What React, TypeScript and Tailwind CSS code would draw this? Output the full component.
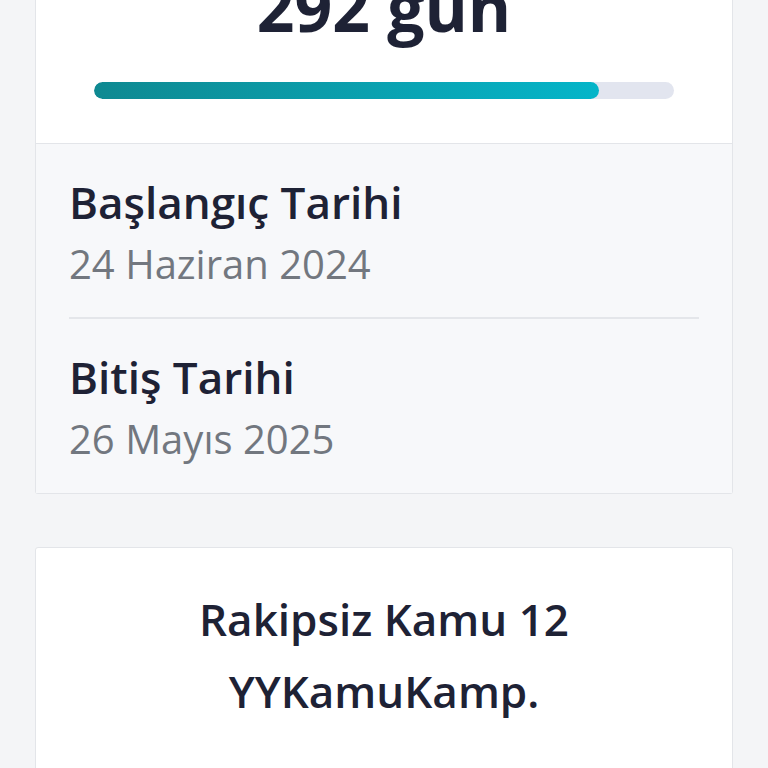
export default function App() {
  return (
    <div
      className="min-h-screen w-full bg-[#f4f5f7] px-[35px] overflow-hidden"
      style={{ fontFamily: "'Open Sans', 'Noto Sans', sans-serif" }}
    >
      <div className="h-[768px] overflow-hidden">
        {/* Countdown card */}
        <div className="-mt-[30px] bg-white border border-t-0 border-[#e3e5e9] rounded-b-[3px]">
          <div className="px-[58px] pb-[44px] flex flex-col items-center">
            <div className="text-[66px] font-bold leading-[72px] text-[#1e2235]">292 gün</div>
            <div className="mt-[40px] w-full h-[17px] rounded-full bg-[#e2e5ef] overflow-hidden">
              <div className="h-full w-[87%] rounded-full bg-gradient-to-r from-[#0e8991] to-[#04b5c9]" />
            </div>
          </div>

          {/* Dates */}
          <div className="border-t border-[#e3e5e9] bg-[#f7f8fa] px-[33px]">
            <div className="pt-8 pb-[29px] border-b-2 border-[#e4e6ea]">
              <div className="text-[44px] font-semibold leading-[52px] text-[#1e2235]">Başlangıç Tarihi</div>
              <div className="mt-3 text-[40px] leading-[48px] text-[#72777f]">24 Haziran 2024</div>
            </div>
            <div className="pt-8 pb-[30px]">
              <div className="text-[44px] font-semibold leading-[52px] text-[#1e2235]">Bitiş Tarihi</div>
              <div className="mt-3 text-[40px] leading-[48px] text-[#72777f]">26 Mayıs 2025</div>
            </div>
          </div>
        </div>

        {/* Course card */}
        <div className="mt-[53px] bg-white border border-[#e3e5e9] rounded-[3px] px-8 pt-[35px] pb-16">
          <div className="text-center text-[44px] font-semibold leading-[72px] text-[#1e2235]">
            Rakipsiz Kamu 12
            <br />
            YYKamuKamp.
          </div>
        </div>
      </div>
    </div>
  );
}
